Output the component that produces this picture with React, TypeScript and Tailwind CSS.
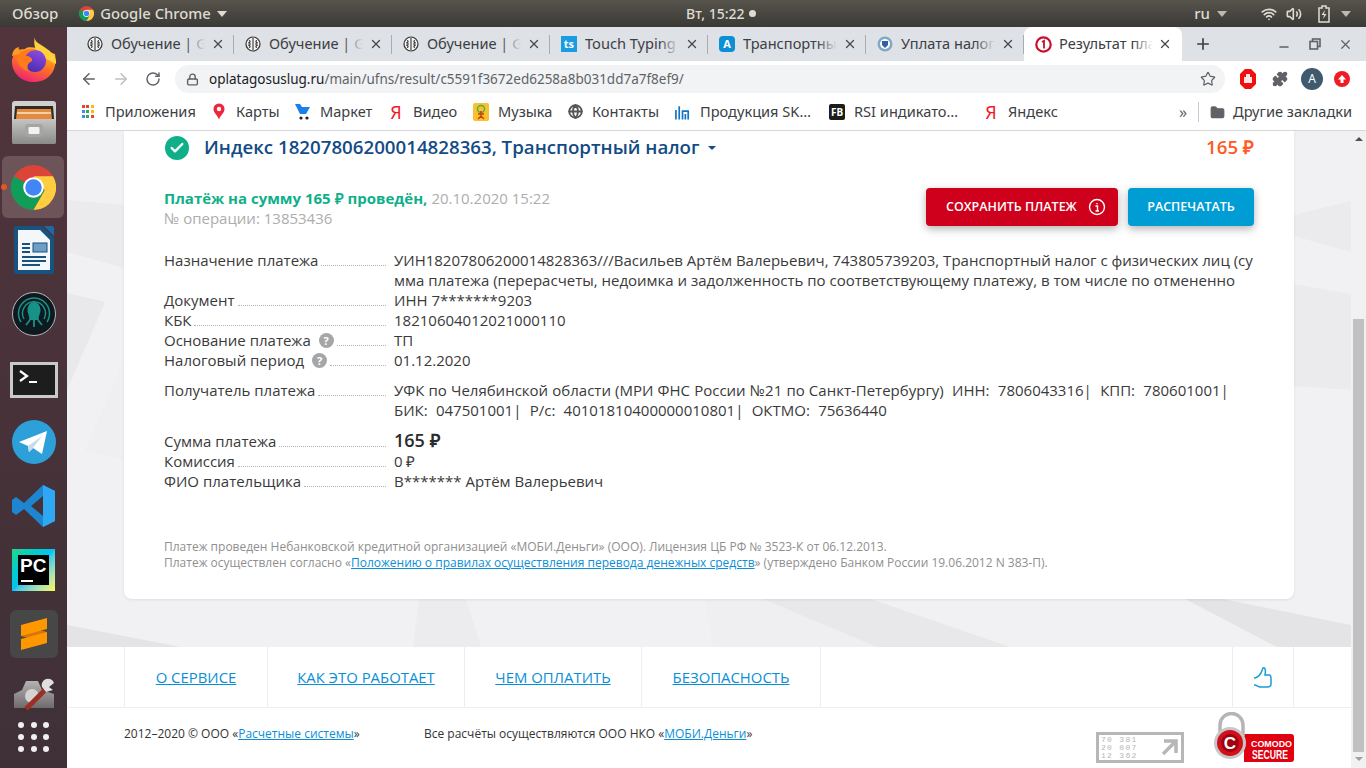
import React from "react";
import { ArrowLeft, ArrowRight, RotateCw, Lock, Star, Puzzle, X, Plus, Minus, Folder, Wifi, Volume2, Check, Globe } from "lucide-react";

const ChromeLogo = ({ size = 16 }: { size?: number }) => (
  <svg width={size} height={size} viewBox="0 0 48 48">
    <circle cx="24" cy="24" r="24" fill="#db4437" />
    <path d="M24 24 L3.2 12 A24 24 0 0 0 24 48 L36 27 Z" fill="#0f9d58" />
    <path d="M24 12 H44.8 A24 24 0 0 1 24 48 L36 27 Z" fill="#ffcd40" />
    <circle cx="24" cy="24" r="11" fill="#fff" />
    <circle cx="24" cy="24" r="8.8" fill="#4285f4" />
  </svg>
);

const BrainIcon = () => (
  <svg width="16" height="16" viewBox="0 0 16 16">
    <circle cx="8" cy="8" r="7" fill="#f4f4f4" stroke="#333" strokeWidth="1.2" />
    <path d="M8 2V14M4 4.5C6 5 5 7 3 7M4 11.5C6 11 5 9 3 9M12 4.5C10 5 11 7 13 7M12 11.5C10 11 11 9 13 9M6 8H4M10 8H12" stroke="#333" strokeWidth="1.1" fill="none" />
  </svg>
);

const tabs = [
  { title: "Обучение | Ge", icon: <BrainIcon /> },
  { title: "Обучение | Ge", icon: <BrainIcon /> },
  { title: "Обучение | Ge", icon: <BrainIcon /> },
  {
    title: "Touch Typing",
    icon: <span className="w-4 h-4 bg-[#1a9ce0] text-white text-[11px] font-bold leading-4 text-center">ts</span>,
  },
  {
    title: "Транспортный",
    icon: <span className="w-4 h-4 rounded-sm bg-[#0b8fd6] text-white text-[11px] font-bold leading-4 text-center">A</span>,
  },
  {
    title: "Уплата налог",
    icon: (
      <svg width="16" height="16" viewBox="0 0 16 16">
        <circle cx="8" cy="8" r="7.5" fill="#7fa8c9" />
        <circle cx="8" cy="8" r="5" fill="#fff" />
        <path d="M5 5H11V9L8 12L5 9Z" fill="#2b62a6" />
      </svg>
    ),
  },
];

const Tab = ({ title, icon }: { title: string; icon: React.ReactNode }) => (
  <div className="relative w-[158px] h-full flex items-center pl-[11px]">
    {icon}
    <span className="ml-[8px] -mt-px w-[94px] overflow-hidden whitespace-nowrap text-[14.6px] text-[#3c4043]">{title}</span>
    <span className="absolute left-[109px] w-[20px] h-5 bg-gradient-to-r from-transparent to-[#dee1e6]" />
    <X size={14} strokeWidth={2.2} className="ml-[6px] text-[#45494d]" />
    <span className="absolute right-0 top-[8px] w-px h-[19px] bg-[#a9adb3]" />
  </div>
);

const yandexIcon = <span className="w-4 text-center text-[#f2182c] text-[18px] leading-none">Я</span>;

const bookmarks: { label: string; width: string; icon: React.ReactNode }[] = [
  {
    label: "Приложения",
    width: "w-[131px]",
    icon: (
      <span className="grid grid-cols-3 gap-[1px] w-[13px] h-[13px]">
        {["#ea4335", "#ea4335", "#fbbc05", "#4285f4", "#34a853", "#fbbc05", "#4285f4", "#34a853", "#ea4335"].map((c, i) => (
          <i key={i} className="block w-[3px] h-[3px]" style={{ backgroundColor: c }} />
        ))}
      </span>
    ),
  },
  {
    label: "Карты",
    width: "w-[84px]",
    icon: (
      <svg width="12" height="17" viewBox="0 0 12 17">
        <path d="M6 0.5A5.5 5.5 0 0 0 .5 6C.5 10 4.5 12 6 16.5C7.5 12 11.5 10 11.5 6A5.5 5.5 0 0 0 6 .5Z" fill="#f0243a" />
        <circle cx="6" cy="6" r="2.2" fill="#fff" />
      </svg>
    ),
  },
  {
    label: "Маркет",
    width: "w-[93px]",
    icon: (
      <svg width="16" height="18" viewBox="0 0 16 18">
        <path d="M0 1H5L7 4H15L11 11H5Z" fill="#1a7fe8" />
        <circle cx="6" cy="15" r="1.6" fill="#222" />
        <circle cx="12" cy="15" r="1.6" fill="#222" />
      </svg>
    ),
  },
  { label: "Видео", width: "w-[85px]", icon: yandexIcon },
  {
    label: "Музыка",
    width: "w-[94px]",
    icon: (
      <svg width="16" height="18" viewBox="0 0 16 18">
        <rect width="16" height="18" rx="2" fill="#fbc02d" />
        <circle cx="8" cy="6" r="3.5" fill="none" stroke="#4caf50" strokeWidth="1.4" />
        <path d="M8 8V15M5 11H11M5 16L8 13L11 16" stroke="#c2410c" strokeWidth="1.4" fill="none" />
      </svg>
    ),
  },
  {
    label: "Контакты",
    width: "w-[108px]",
    icon: <Globe size={15} strokeWidth={3} className="text-[#555]" />,
  },
  {
    label: "Продукция SK…",
    width: "w-[154px]",
    icon: (
      <svg width="17" height="18" viewBox="0 0 17 18">
        <path d="M1 17V7M4.5 17V3M8 17V8H14V17M11 17V11" stroke="#1273c4" strokeWidth="1.8" fill="none" />
      </svg>
    ),
  },
  {
    label: "RSI индикато…",
    width: "w-[154px]",
    icon: <span className="w-4 h-4 rounded-[2px] bg-[#1c1c1c] text-white text-[10px] font-bold leading-4 text-center">FB</span>,
  },
  { label: "Яндекс", width: "w-[196px]", icon: yandexIcon },
];

const DottedRow = ({
  label,
  hint,
  children,
  className,
}: {
  label: string;
  hint?: boolean;
  children: React.ReactNode;
  className?: string;
}) => (
  <div className={`flex ${className ?? ""}`}>
    <div className="w-[230px] shrink-0 flex items-start h-5 pr-[8px]">
      <span className="whitespace-nowrap">{label}</span>
      {hint && (
        <span className="ml-[8px] mt-[3px] w-[15px] h-[15px] rounded-full bg-[#a6a6a6] text-white text-[11px] font-bold leading-[15px] text-center">?</span>
      )}
      <span className="ml-[3px] flex-1 h-[16px] border-b border-dotted border-[#b5b5b5]" />
    </div>
    <div className="flex-1 min-w-0">{children}</div>
  </div>
);

// faint polygons behind the card
const Background = () => (
  <svg className="absolute inset-0 w-full h-full" viewBox="0 0 1284 516" preserveAspectRatio="none">
    <polygon points="1227,84 1284,70 1284,121 1227,105" fill="#ebebed" />
    <polygon points="1227,153 1284,163 1284,259 1227,255" fill="#ebebed" />
    <polygon points="1118,468 1156,468 1284,494 1284,516 1210,516" fill="#e4e4e7" />
    <polygon points="638,468 696,468 810,516 646,516" fill="#efeff1" />
    <polygon points="696,468 804,468 943,516 810,516" fill="#e8e8ea" />
    <polygon points="352,468 399,468 414,516 346,516" fill="#ececee" />
    <polygon points="0,494 114,516 0,516" fill="#e4e4e7" />
    <polygon points="0,69 57,74 57,137 0,121" fill="#ebebed" />
    <polygon points="0,162 38,171 0,259" fill="#e9e9eb" />
    <polygon points="57,230 57,329 18,320" fill="#efeff1" />
  </svg>
);

const DockItem = ({ children }: { children: React.ReactNode }) => (
  <div className="h-16 w-full flex items-center justify-center shrink-0">{children}</div>
);

const Dock = () => (
  <div className="w-[67px] shrink-0 flex flex-col items-center bg-gradient-to-b from-[#51343c] to-[#3f3037]">
    <div className="h-[63px] w-full flex items-center justify-center shrink-0">
      <svg width="46" height="46" viewBox="0 0 46 46">
        <defs>
          <linearGradient id="ffBody" x1="0.8" y1="0" x2="0.3" y2="1">
            <stop offset="0" stopColor="#ffcf30" />
            <stop offset="0.45" stopColor="#ff7b1c" />
            <stop offset="1" stopColor="#ee1f78" />
          </linearGradient>
          <linearGradient id="ffGlobe" x1="0.7" y1="0" x2="0.3" y2="1">
            <stop offset="0" stopColor="#8f4be0" />
            <stop offset="1" stopColor="#4a2bb0" />
          </linearGradient>
        </defs>
        <path d="M3 17C6 12 10 14 14 13C18 10 22 12 26 12L44 18C47 34 38 46 23 46C10 46 0 36 1 24Z" fill="url(#ffBody)" />
        <path d="M24 0C22 6 30 8 36 13C42 17 46 23 45 28L30 20C24 15 22 8 24 0Z" fill="#ffd23c" />
        <path d="M1 20C2 14 4 12 8 11C7 14 9 17 11 17Z" fill="#ff9a26" />
        <circle cx="24" cy="25" r="11" fill="url(#ffGlobe)" />
        <path d="M6 22C8 15 18 11 26 14C20 14 16 17 15 20C18 20 22 22 21 25C16 27 15 32 19 36C12 34 6 29 6 22Z" fill="#ff7a1a" />
      </svg>
    </div>
    <DockItem>
      <svg width="44" height="43" viewBox="0 0 44 43">
        <defs>
          <linearGradient id="cabinet" x1="0" y1="0" x2="0" y2="1">
            <stop offset="0" stopColor="#c4c4c2" />
            <stop offset="1" stopColor="#8b8b89" />
          </linearGradient>
        </defs>
        <rect width="44" height="43" rx="3" fill="#d0d0ce" />
        <polygon points="3,5 41,5 42,18 2,18" fill="#2f2b27" />
        <polygon points="5,8 39,8 40,18 4,18" fill="#e58a3c" />
        <path d="M5 12H39" stroke="#f7e6d0" strokeWidth="1.5" />
        <rect y="18" width="44" height="25" rx="2" fill="url(#cabinet)" />
        <rect x="13" y="23" width="18" height="13" rx="3" fill="#a5a5a3" />
        <rect x="16.5" y="26" width="11" height="7" rx="1" fill="#f2f2f2" />
      </svg>
    </DockItem>
    <DockItem>
      <div className="mt-[2px] mr-px w-[62px] h-[62px] rounded-md bg-[#6d5459] relative flex items-center justify-center">
        <ChromeLogo size={45} />
        <i className="absolute -left-[1px] top-[28px] w-[6px] h-[6px] rounded-full bg-[#e95420]" />
      </div>
    </DockItem>
    <DockItem>
      <svg width="42" height="48" viewBox="0 0 40 48">
        <path d="M2 0H28L40 12V46A2 2 0 0 1 38 48H2A2 2 0 0 1 0 46V2A2 2 0 0 1 2 0Z" fill="#18527f" />
        <path d="M30 0H38A2 2 0 0 1 40 2V10Z" fill="#1a6aa5" />
        <path d="M4 4H26L36 14V44H4Z" fill="#f4f7fa" />
        <rect x="19" y="17" width="14" height="9" fill="#6f9dc4" stroke="#18527f" />
        <path d="M8 18H16M8 22H16M8 26H16M8 31H32M8 35H32M8 39H26" stroke="#18527f" strokeWidth="2" />
      </svg>
    </DockItem>
    <DockItem>
      <svg width="44" height="44" viewBox="0 0 44 44">
        <circle cx="22" cy="22" r="21.5" fill="#0f1a20" stroke="#b7b7b7" strokeWidth="1" />
        <path d="M9 30A15.5 15.5 0 1 1 35 30" fill="none" stroke="#179287" strokeWidth="1.5" />
        <path d="M12 27A11.5 11.5 0 1 1 32 27" fill="none" stroke="#179287" strokeWidth="1.5" />
        <path d="M22 10C26 10 28.5 14 28.5 18C28.5 22 26 24 27 28H17C18 24 15.5 22 15.5 18C15.5 14 18 10 22 10Z" fill="#179287" />
        <path d="M18 28L14 33M22 28V35M26 28L30 33" stroke="#179287" strokeWidth="1.8" />
      </svg>
    </DockItem>
    <DockItem>
      <div className="mt-[4px] w-[48px] h-[36px] bg-[#1d1d1d] border-[3px] border-[#c9c9c9]">
        <svg width="42" height="30" viewBox="0 0 42 30">
          <path d="M7 6L14 11L7 16" stroke="#fff" strokeWidth="2.2" fill="none" />
          <path d="M16 17H24" stroke="#fff" strokeWidth="2" />
        </svg>
      </div>
    </DockItem>
    <DockItem>
      <svg width="44" height="44" viewBox="0 0 44 44">
        <circle cx="22" cy="22" r="22" fill="#2ea0d9" />
        <path d="M7 22L35 11L30 34L21 28L17 32L16 26Z" fill="#fff" />
        <path d="M16 26L30 16L21 28L17 32Z" fill="#c8dcec" />
      </svg>
    </DockItem>
    <DockItem>
      <svg width="44" height="44" viewBox="0 0 44 44">
        <path d="M31 1L43 7V37L31 43L12 25L4 31L0 28V16L4 13L12 19ZM31 12L19 22L31 32Z" fill="#1e86d0" fillRule="evenodd" />
        <path d="M31 1L43 7V37L31 43Z" fill="#2ea8f2" />
      </svg>
    </DockItem>
    <DockItem>
      <div className="w-[43px] h-[42px] bg-gradient-to-br from-[#21d789] via-[#07c3f2] to-[#fcf84a] flex items-center justify-center">
        <div className="w-[31px] h-[30px] bg-black text-white text-[19px] font-bold leading-none pl-[2px] pt-[1px] relative font-['Liberation_Sans',sans-serif]">
          PC
          <i className="absolute left-[3px] bottom-[3px] w-[12px] h-[2px] bg-white" />
        </div>
      </div>
    </DockItem>
    <DockItem>
      <div className="w-[48px] h-[48px] rounded-md bg-[#474747] flex items-center justify-center">
        <svg width="26" height="32" viewBox="0 0 26 32">
          <polygon points="0,7 0,18 26,25 26,14" fill="#d97706" />
          <polygon points="0,7 26,0 26,11 0,18" fill="#ff9800" />
          <polygon points="0,21 26,14 26,25 0,32" fill="#ff9800" />
        </svg>
      </div>
    </DockItem>
    <div className="h-[56px] w-full flex items-center justify-center shrink-0">
      <svg width="44" height="32" viewBox="0 0 44 32">
        <defs>
          <linearGradient id="gear" x1="0" y1="0" x2="0" y2="1">
            <stop offset="0" stopColor="#b5b2b2" />
            <stop offset="1" stopColor="#6f6a6c" />
          </linearGradient>
        </defs>
        <path d="M2 30V16L10 12L14 3H26L30 12L42 16V30Z" fill="url(#gear)" />
        <circle cx="20" cy="18" r="7" fill="#d6d3d3" />
        <path d="M14 31L33 12" stroke="#9c2f24" strokeWidth="5" />
        <path d="M30 9A6 6 0 0 1 42 5L37 9L41 12L34 14Z" fill="#e0dede" />
      </svg>
    </div>
    <div className="grid grid-cols-3 gap-x-[6.5px] gap-y-[6px]">
      {Array.from({ length: 9 }).map((_, i) => (
        <i key={i} className="block w-[6px] h-[6px] rounded-full bg-[#f0eeee]" />
      ))}
    </div>
  </div>
);

export default function App() {
  return (
    <div className="w-[1366px] h-[768px] overflow-hidden flex flex-col font-['Noto_Sans',sans-serif]">
      {/* Ubuntu top bar */}
      <div className="h-[27px] shrink-0 relative flex items-center bg-gradient-to-b from-[#57544c] to-[#3a3935] text-[#dfdbd2] font-medium">
        <span className="ml-[12px] text-[15px]">Обзор</span>
        <span className="ml-[21px] flex items-center">
          <ChromeLogo size={15} />
        </span>
        <span className="ml-[6px] text-[14.8px]">Google Chrome</span>
        <span className="ml-[6px] w-0 h-0 border-x-[5px] border-x-transparent border-t-[6px] border-t-[#dfdbd2]" />
        <span className="absolute left-[686px] flex items-center text-[14px]">
          Вт, 15:22
          <i className="ml-[4px] w-[7px] h-[7px] rounded-full bg-[#dfdbd2]" />
        </span>
        <span className="ml-auto flex items-center pr-[15px] text-[15px]">
          <span>ru</span>
          <span className="ml-[7px] w-0 h-0 border-x-[5px] border-x-transparent border-t-[6px] border-t-[#bdb9b0]" />
          <Wifi size={16} strokeWidth={2.6} className="ml-[34px]" />
          <Volume2 size={16} strokeWidth={2.4} className="ml-[9px]" />
          <svg width="12" height="18" viewBox="0 0 12 18" className="ml-[16px]">
            <path d="M4 1H8V3H11V17H1V3H4Z" fill="none" stroke="#dfdbd2" strokeWidth="1.5" />
            <path d="M7 5L3.5 10H6L5 14L8.5 9H6Z" fill="#dfdbd2" />
          </svg>
          <span className="ml-[11px] w-0 h-0 border-x-[5px] border-x-transparent border-t-[6px] border-t-[#bdb9b0]" />
        </span>
      </div>

      <div className="flex-1 flex min-h-0">
        <Dock />

        {/* Browser */}
        <div className="flex-1 min-w-0 flex flex-col">
          <div className="h-[34px] shrink-0 bg-[#dee1e6] flex items-stretch pl-[9px]">
            {tabs.map((t, i) => (
              <Tab key={i} title={t.title} icon={t.icon} />
            ))}
            <div className="w-[158px] rounded-t-lg bg-white flex items-center pl-[11px] relative">
              <svg width="17" height="17" viewBox="0 0 17 17">
                <circle cx="8.5" cy="8.5" r="7.2" fill="none" stroke="#c8102e" strokeWidth="2.2" />
                <path d="M7 6L9 4.8V12.5" stroke="#c8102e" strokeWidth="1.8" fill="none" />
              </svg>
              <span className="ml-[7px] -mt-px w-[94px] overflow-hidden whitespace-nowrap text-[14.6px] text-[#3c4043]">Результат пла</span>
              <span className="absolute left-[109px] w-[20px] h-5 bg-gradient-to-r from-transparent to-white" />
              <X size={14} strokeWidth={2.2} className="ml-[5px] text-[#45494d]" />
            </div>
            <Plus size={18} strokeWidth={2.2} className="ml-[12px] self-center text-[#3c4043]" />
            <div className="ml-auto flex items-center pr-[13px] text-[#5f6368]">
              <Minus size={14} strokeWidth={2.2} className="mt-[6px]" />
              <svg width="12" height="12" viewBox="0 0 12 12" className="ml-[18px]">
                <rect x="3.5" y="1" width="7.5" height="7.5" fill="none" stroke="#5f6368" strokeWidth="1.6" />
                <rect x="1" y="3.5" width="7.5" height="7.5" fill="#dee1e6" stroke="#5f6368" strokeWidth="1.6" />
              </svg>
              <X size={15} strokeWidth={2} className="ml-[17px]" />
            </div>
          </div>

          <div className="h-9 shrink-0 bg-white flex items-center pl-[13px]">
            <ArrowLeft size={18} strokeWidth={2} className="text-[#5f6368]" />
            <ArrowRight size={18} strokeWidth={2} className="ml-[14px] text-[#bcbfc3]" />
            <RotateCw size={16} strokeWidth={2.2} className="ml-[15px] text-[#5f6368]" />
            <div className="ml-[14px] w-[1050px] h-7 rounded-full bg-[#f1f3f4] flex items-center pl-[11px] pr-[9px] text-[13.5px]">
              <Lock size={13} strokeWidth={2.6} className="text-[#5f6368]" />
              <span className="ml-[10px] text-[#202124]">oplatagosuslug.ru</span>
              <span className="text-[#5f6368]">/main/ufns/result/c5591f3672ed6258a8b031dd7a7f8ef9/</span>
              <Star size={16} strokeWidth={1.8} className="ml-auto text-[#5f6368]" />
            </div>
            <svg width="16" height="20" viewBox="0 0 16 20" className="ml-[15px]">
              <path d="M5 0H11L16 5V15L11 20H5L0 15V5Z" fill="#f01010" />
              <path d="M5 14V8M7 14V5M9 14V5M11 14V8" stroke="#fff" strokeWidth="1.8" />
            </svg>
            <Puzzle size={16} fill="#5f6368" className="ml-[16px] text-[#5f6368]" />
            <span className="ml-[13px] w-[22px] h-[22px] rounded-full bg-[#3f5a6c] text-white text-[12px] leading-[22px] text-center">A</span>
            <span className="ml-[11px] w-4 h-4 rounded-full bg-[#ee1c25] flex items-center justify-center">
              <svg width="10" height="10" viewBox="0 0 10 10">
                <path d="M5 1L9 5.5H6.5V9H3.5V5.5H1Z" fill="#fff" />
              </svg>
            </span>
          </div>

          <div className="h-[34px] shrink-0 bg-white border-b border-[#d5d7da] flex items-center pl-[13px] pb-[3px] text-[14.6px] text-[#3c4043]">
            {bookmarks.map((b) => (
              <div key={b.label} className={`${b.width} flex items-center gap-[10px] whitespace-nowrap`}>
                <span className="w-4 flex items-center justify-center">{b.icon}</span>
                <span className="-ml-[1px]">{b.label}</span>
              </div>
            ))}
            <span className="w-[16px] text-[#5f6368] text-[16px] leading-none">»</span>
            <span className="ml-[3px] w-px h-5 bg-[#c9cbce]" />
            <Folder size={15} fill="#5f6368" className="ml-[11px] text-[#5f6368]" />
            <span className="ml-[8px]">Другие закладки</span>
          </div>

          {/* Page */}
          <div className="flex-1 min-h-0 flex">
            <div className="flex-1 min-w-0 flex flex-col font-['Open_Sans',sans-serif]">
              <div className="relative h-[516px] shrink-0 bg-[#f1f1f3] overflow-hidden px-[57px]">
                <Background />
                <div className="relative h-[468px] rounded-b-lg bg-white shadow-[0_1px_3px_rgba(0,0,0,0.08)] px-[40px] text-[15px] leading-5 text-[#3a3a3a]">
                  <div className="flex items-center h-[34px]">
                    <span className="ml-px w-6 h-6 rounded-full bg-[#0fb089] flex items-center justify-center">
                      <Check size={16} strokeWidth={3.5} className="text-white" />
                    </span>
                    <span className="ml-[15px] -mt-[3px] text-[18.7px] font-semibold text-[#134b85] whitespace-nowrap">Индекс 18207806200014828363, Транспортный налог</span>
                    <span className="ml-[8px] -mt-[1px] w-0 h-0 border-x-[4px] border-x-transparent border-t-[4px] border-t-[#134b85]" />
                    <span className="ml-auto -mt-[2px] text-[18.7px] font-semibold text-[#ff5a26]">165 ₽</span>
                  </div>
                  <div className="flex mt-[23px] h-[38px]">
                    <div>
                      <div>
                        <span className="font-bold text-[#0fb089]">Платёж на сумму 165 ₽ проведён,</span>
                        <span className="ml-1 text-[#adadad]">20.10.2020 15:22</span>
                      </div>
                      <div className="text-[#adadad]">№ операции: 13853436</div>
                    </div>
                    <button className="ml-auto w-[192px] h-[38px] flex items-center pl-[20px] rounded-sm bg-[#cf001b] text-white text-[12.5px] font-semibold uppercase shadow-[0_3px_8px_rgba(0,0,0,0.3)]">
                      Сохранить платеж
                      <svg width="18" height="18" viewBox="0 0 18 18" className="ml-[11px]">
                        <circle cx="9" cy="9" r="7.5" fill="none" stroke="#fff" strokeWidth="1.4" />
                        <path d="M7.5 8H9.5V13M7.5 13H11M9 5V6.3" stroke="#fff" strokeWidth="1.4" fill="none" />
                      </svg>
                    </button>
                    <button className="ml-[10px] w-[126px] h-[38px] rounded-sm bg-[#009dd4] text-white text-[12.5px] font-semibold uppercase shadow-[0_3px_8px_rgba(0,0,0,0.3)]">
                      Распечатать
                    </button>
                  </div>
                  <div className="mt-[24px]">
                    <DottedRow label="Назначение платежа">
                      <div className="whitespace-nowrap">УИН18207806200014828363///Васильев Артём Валерьевич, 743805739203, Транспортный налог с физических лиц (су</div>
                      <div className="whitespace-nowrap">мма платежа (перерасчеты, недоимка и задолженность по соответствующему платежу, в том числе по отмененно</div>
                    </DottedRow>
                    <DottedRow label="Документ">ИНН 7*******9203</DottedRow>
                    <DottedRow label="КБК">18210604012021000110</DottedRow>
                    <DottedRow label="Основание платежа" hint>ТП</DottedRow>
                    <DottedRow label="Налоговый период" hint>01.12.2020</DottedRow>
                    <DottedRow label="Получатель платежа" className="mt-[10px]">
                      <div className="whitespace-pre [word-spacing:0.25px]">УФК по Челябинской области (МРИ ФНС России №21 по Санкт-Петербургу)  ИНН:  7806043316|  КПП:  780601001|</div>
                      <div className="whitespace-pre [word-spacing:0.25px]">БИК:  047501001|  Р/с:  40101810400000010801|  ОКТМО:  75636440</div>
                    </DottedRow>
                    <DottedRow label="Сумма платежа" className="mt-[10px] items-center">
                      <span className="text-[18px] font-semibold text-[#2b2b2b]">165 ₽</span>
                    </DottedRow>
                    <DottedRow label="Комиссия">0 ₽</DottedRow>
                    <DottedRow label="ФИО плательщика">В******* Артём Валерьевич</DottedRow>
                  </div>
                  <div className="mt-[48px] text-[12px] leading-4 text-[#8f8f8f]">
                    <div>Платеж проведен Небанковской кредитной организацией «МОБИ.Деньги» (ООО). Лицензия ЦБ РФ № 3523-К от 06.12.2013.</div>
                    <div>
                      Платеж осуществлен согласно «<a className="text-[#0a8fd6] underline">Положению о правилах осуществления перевода денежных средств</a>» (утверждено Банком России 19.06.2012 N 383-П).
                    </div>
                  </div>
                </div>
              </div>

              {/* Footer */}
              <div className="flex-1 bg-white">
                <div className="h-[61px] border-b border-[#eeeeee] pl-[57px] flex text-[14.9px] text-[#0a8fd6] uppercase">
                  <div className="w-[144px] border-x border-[#eeeeee] flex items-center justify-center underline">О сервисе</div>
                  <div className="w-[197px] border-r border-[#eeeeee] flex items-center justify-center underline">Как это работает</div>
                  <div className="w-[177px] border-r border-[#eeeeee] flex items-center justify-center underline">Чем оплатить</div>
                  <div className="w-[179px] border-r border-[#eeeeee] flex items-center justify-center underline">Безопасность</div>
                  <div className="ml-[411px] w-[62px] border-x border-[#eeeeee] flex items-center justify-center">
                    <svg width="20" height="21" viewBox="0 0 20 21">
                      <path d="M1 11C4 11 6 9 8 6L10 1C12 0 13 3 12 8H16C18 8 18 10 18 12V17C18 19 16 20 14 20H7C5 20 4 18 1 18" fill="none" stroke="#1a9ad6" strokeWidth="1.5" />
                    </svg>
                  </div>
                </div>
                <div className="h-[60px] pl-[57px] flex text-[12px] text-[#333]">
                  <div className="w-[300px] pt-[17px]">
                    2012–2020 © ООО «<a className="text-[#0a8fd6] underline">Расчетные системы</a>»
                  </div>
                  <div className="w-[672px] pt-[17px]">
                    Все расчёты осуществляются ООО НКО «<a className="text-[#0a8fd6] underline">МОБИ.Деньги</a>»
                  </div>
                  <div className="mt-[24px] w-[88px] h-[31px] border-[3px] border-[#b7b7b7] relative text-[#b5b5b5] text-[8px] leading-[8px] tracking-[1.3px] font-['Liberation_Mono',monospace] pl-[2px] pt-[1px]">
                    <div>70 381</div>
                    <div>20 007</div>
                    <div>12 362</div>
                    <svg width="18" height="18" viewBox="0 0 18 18" className="absolute right-[2px] top-[2px]">
                      <path d="M3 4H15V16M15 4L2 17" stroke="#b7b7b7" strokeWidth="3.5" fill="none" />
                    </svg>
                  </div>
                  <svg width="80" height="54" viewBox="0 0 80 54" className="ml-[30px] mt-[4px]">
                    <path d="M30 22H77A3 3 0 0 1 80 25V47A3 3 0 0 1 77 50H30Z" fill="#e00010" />
                    <path d="M6 24V13A11.5 11.5 0 0 1 29 13V24" fill="none" stroke="#b5b5b5" strokeWidth="3.5" />
                    <circle cx="16" cy="31" r="16" fill="#c7c7c7" />
                    <circle cx="16" cy="31" r="13" fill="#d0101c" />
                    <circle cx="16" cy="31" r="9" fill="#a00010" />
                    <text x="16" y="37" textAnchor="middle" fontSize="17" fontWeight="700" fill="#fff" fontFamily="Liberation Sans, sans-serif">C</text>
                    <text x="37" y="35" fontSize="9" fontWeight="700" fill="#fff" fontFamily="Liberation Sans, sans-serif" textLength={41} lengthAdjust="spacingAndGlyphs">COMODO</text>
                    <text x="38" y="47" fontSize="12.5" fontWeight="700" fill="#fff" fontFamily="Liberation Sans, sans-serif" textLength={36} lengthAdjust="spacingAndGlyphs">SECURE</text>
                  </svg>
                </div>
              </div>
            </div>

            {/* Scrollbar */}
            <div className="w-[15px] shrink-0 bg-[#f1f1f1] flex flex-col items-center">
              <span className="mt-[6px] w-0 h-0 border-x-[4px] border-x-transparent border-b-[4px] border-b-[#505050]" />
              <div className="mt-[178px] w-[11px] flex-1 bg-[#c1c1c1]" />
              <span className="mt-[5px] mb-[7px] w-0 h-0 border-x-[4px] border-x-transparent border-t-[4px] border-t-[#a0a0a0]" />
            </div>
          </div>
        </div>
      </div>
    </div>
  );
}
